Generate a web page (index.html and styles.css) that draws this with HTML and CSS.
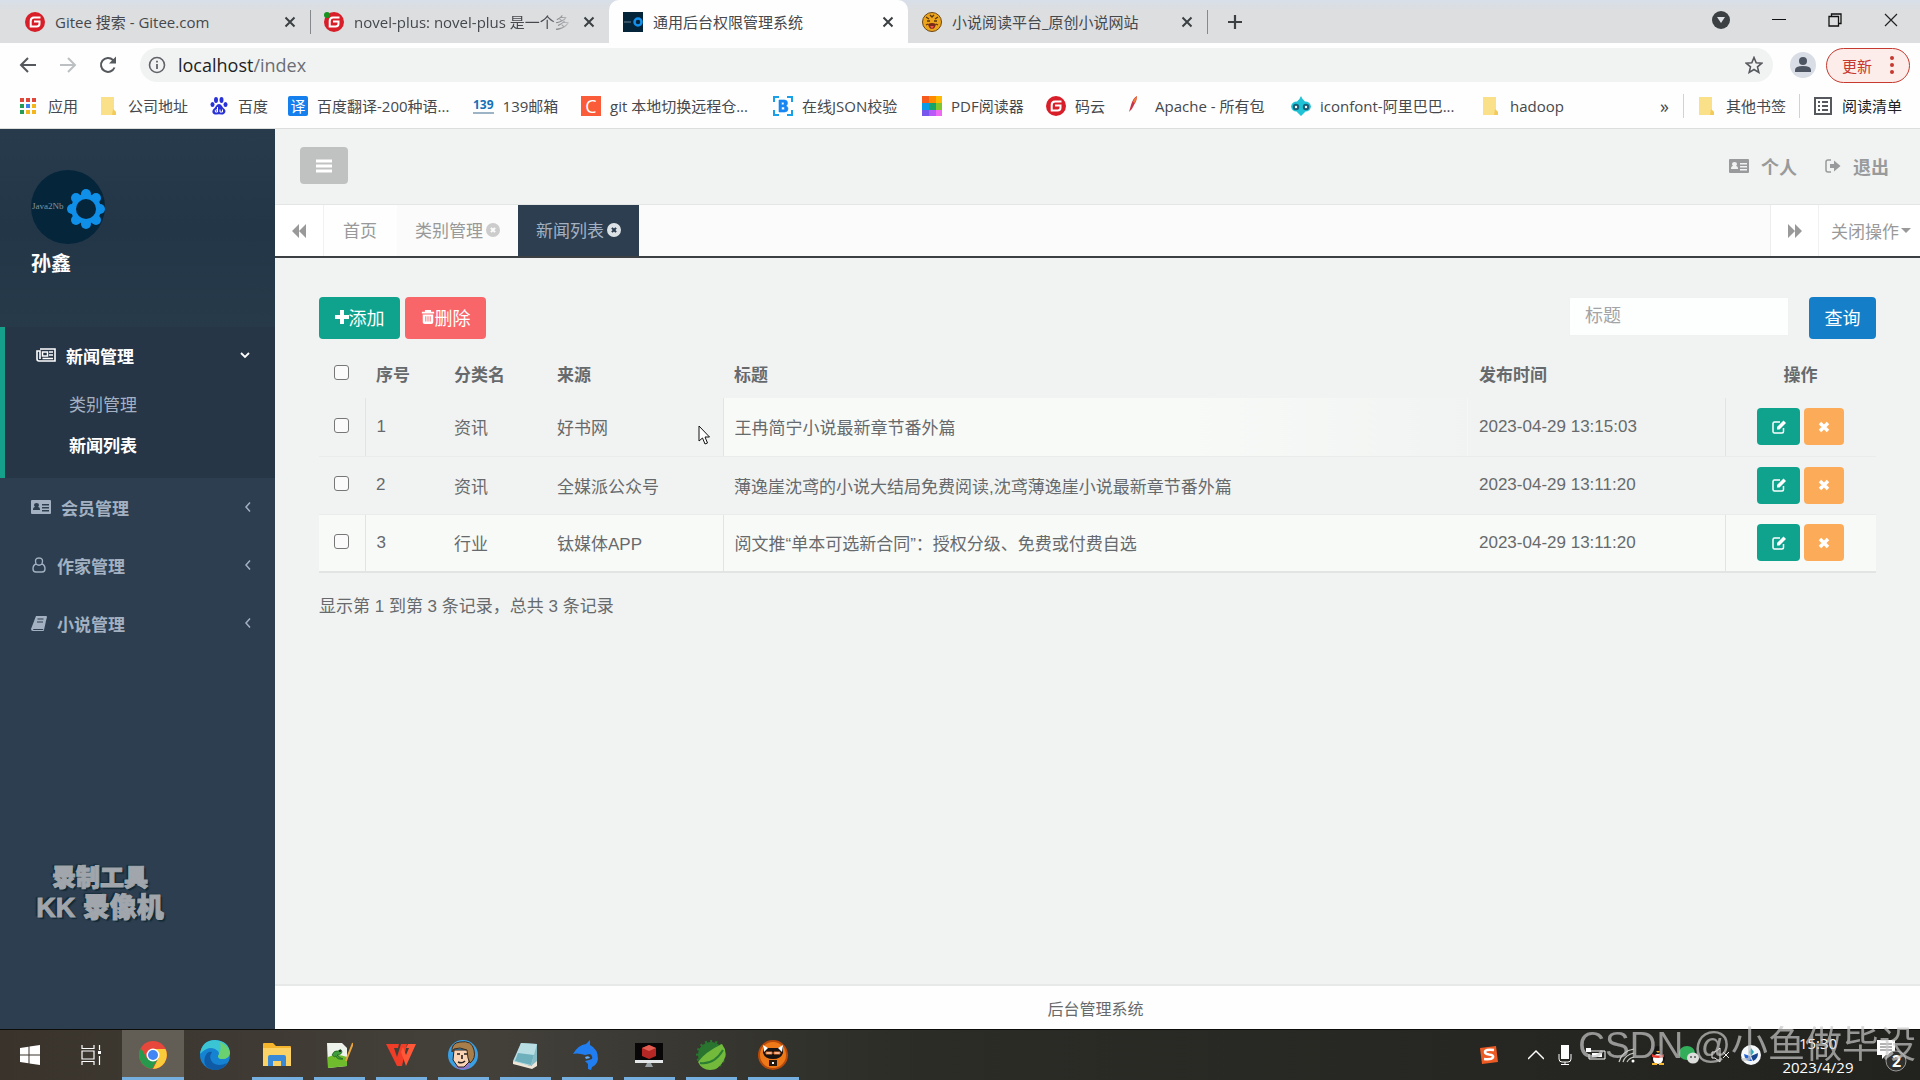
FILE: index.html
```html
<!DOCTYPE html>
<html lang="zh-CN">
<head>
    <meta charset="UTF-8">
    <meta name="viewport" content="width=device-width, initial-scale=1.0">
    <title>通用后台权限管理系统</title>
    <link rel="stylesheet" href="styles.css">
</head>
<body>
    <!-- shared icons -->
    <svg class="sprite" aria-hidden="true">
        <symbol id="gitee" viewBox="0 0 20 20"><circle cx="10" cy="10" r="10" fill="#d81e28"/><path d="M15.500 5.500H9Q5.700 5.500 5.700 9v5.500h6q2.800 0 2.800-2.800V9.500H9" fill="none" stroke="#fff" stroke-width="2"/></symbol>
        <symbol id="folder" viewBox="0 0 20 20"><path d="M2 1h13v13l2 2v3H2z" fill="#fbe08a"/><path d="M14 13l3 3v3h-4z" fill="#f3cb5a"/></symbol>
        <symbol id="cross" viewBox="0 0 12 12"><path d="M1.500 1.500l9 9m0-9l-9 9" stroke="#3c4043" stroke-width="2"/></symbol>
        <symbol id="edit" viewBox="0 0 16 16"><path d="M12.500 9v3.500q0 1.500-1.500 1.500H3.500Q2 14 2 12.500v-8Q2 3 3.500 3H9" fill="none" stroke="#fff" stroke-width="1.500"/><path d="M6 8l6.500-6.500L15 4l-6.500 6.500H6z" fill="#fff"/></symbol>
        <symbol id="remove" viewBox="0 0 12 12"><path d="M2 2l8 8m0-8l-8 8" stroke="#fff" stroke-width="3.500"/></symbol>
        <symbol id="card" viewBox="0 0 20 16"><path d="M0 2q0-1 1-1h18q1 0 1 1v12q0 1-1 1H1q-1 0-1-1zm2 9h7q0-3-2-3 1-1 1-2 0-2-2.500-2T3 6q0 1 1 2-2 0-2 3zm9-6v1.500h7V5zm0 3v1.500h7V8zm0 3v1.500h7V11z" fill="currentColor" fill-rule="evenodd"/></symbol>
        <symbol id="left" viewBox="0 0 8 12"><path d="M6 1.500L2 6l4 4.500" fill="none" stroke="currentColor" stroke-width="1.500"/></symbol>
        <symbol id="down" viewBox="0 0 12 12"><path d="M2 4l4 4 4-4" fill="none" stroke="currentColor" stroke-width="1.800"/></symbol>
        <symbol id="rewind" viewBox="0 0 14 14"><path d="M7 0v14L0 7zm7 0v14L7 7z" fill="currentColor"/></symbol>
        <symbol id="forward" viewBox="0 0 14 14"><path d="M0 0l7 7-7 7zm7 0l7 7-7 7z" fill="currentColor"/></symbol>
        <symbol id="closed" viewBox="0 0 14 14"><path d="M7 0a7 7 0 1 0 0 14A7 7 0 0 0 7 0zM4.200 5.600l1.400-1.400L7 5.600l1.400-1.400 1.400 1.400L8.400 7l1.400 1.400-1.400 1.400L7 8.400 5.600 9.800 4.200 8.400 5.600 7z" fill="currentColor" fill-rule="evenodd"/></symbol>
    </svg>

    <header class="browser">
        <div class="tabstrip">
            <div class="tab"><svg class="i20"><use href="#gitee"/></svg><span>Gitee 搜索 - Gitee.com</span><button class="plain" aria-label="关闭"><svg class="i12"><use href="#cross"/></svg></button></div>
            <div class="tab line"><svg class="i20"><use href="#gitee"/><circle cx="3" cy="3" r="3" fill="#16941f"/></svg><span class="fade">novel-plus: novel-plus 是一个多</span><button class="plain" aria-label="关闭"><svg class="i12"><use href="#cross"/></svg></button></div>
            <div class="tab active"><svg class="i20" viewBox="0 0 20 20"><path fill="#04243a" d="M0 0h20v20H0z"/><path stroke="#6d8090" d="M1 10h7"/><circle cx="15" cy="10" r="3.500" fill="none" stroke="#1292ee" stroke-width="2.500"/></svg><span>通用后台权限管理系统</span><button class="plain" aria-label="关闭"><svg class="i12"><use href="#cross"/></svg></button></div>
            <div class="tab"><svg class="i20" viewBox="0 0 20 20"><circle cx="10" cy="10" r="9.500" fill="#eda51b" stroke="#6b4514"/><path d="M4 5l3 2m9-2l-3 2M5 9h3m4 0h3M4 13l2-1m10 1l-2-1M8 3l2 2 2-2" stroke="#5b3510" stroke-width="1.300" fill="none"/><path d="M6 12q4-2 8 0-1 5-4 5t-4-5" fill="#7b2a1a"/><path d="M8 14h4l-2 3z" fill="#f2564c"/></svg><span>小说阅读平台_原创小说网站</span><button class="plain" aria-label="关闭"><svg class="i12"><use href="#cross"/></svg></button></div>
            <button class="plain newtab line" aria-label="新标签页"><svg class="i16" viewBox="0 0 16 16"><path d="M8 1v14M1 8h14" stroke="#3c4043" stroke-width="2.200"/></svg></button>
            <div class="window">
                <svg class="i18" viewBox="0 0 18 18"><circle cx="9" cy="9" r="9" fill="#3c4043"/><path d="M5 6h8l-4 6z" fill="#dee1e6"/></svg>
                <svg class="i14" viewBox="0 0 14 14"><path d="M0 6.500h14" stroke="#111"/></svg>
                <svg class="i14" viewBox="0 0 14 14"><path d="M1 3.500h9.500v9.500H1zM3.500 3V1H13v9.500h-2" fill="none" stroke="#111" stroke-width="1.300"/></svg>
                <svg class="i14" viewBox="0 0 14 14"><path d="M1 1l12 12M13 1L1 13" stroke="#222" stroke-width="1.200"/></svg>
            </div>
        </div>
        <div class="toolbar">
            <button class="plain" aria-label="后退"><svg class="i20" viewBox="0 0 20 20"><path d="M18 10H3m7-7l-7 7 7 7" fill="none" stroke="#55585c" stroke-width="2"/></svg></button>
            <button class="plain" aria-label="前进"><svg class="i20" viewBox="0 0 20 20"><path d="M2 10h15m-7-7l7 7-7 7" fill="none" stroke="#bdc0c3" stroke-width="2"/></svg></button>
            <button class="plain" aria-label="刷新"><svg class="i20" viewBox="0 0 20 20"><path d="M16.500 12.500A7 7 0 1 1 15 5l2 2" fill="none" stroke="#55585c" stroke-width="2"/><path d="M18 1.500V8.500H11z" fill="#55585c"/></svg></button>
            <div class="omnibox">
                <svg class="i18" viewBox="0 0 18 18"><circle cx="9" cy="9" r="7.500" fill="none" stroke="#5f6368" stroke-width="1.600"/><path d="M9 8v5M9 4.700v1.800" stroke="#5f6368" stroke-width="1.800"/></svg>
                <span class="url">localhost<i>/index</i></span>
                <svg class="i18" viewBox="0 0 18 18"><path d="M9 1.500l2.200 5.200 5.600.5-4.300 3.700 1.300 5.500L9 13.500l-4.800 2.900 1.300-5.500L1.200 7.200l5.600-.5z" fill="none" stroke="#55585c" stroke-width="1.600"/></svg>
            </div>
            <svg class="i28" viewBox="0 0 28 28"><circle cx="14" cy="14" r="13" fill="#d9dde5"/><circle cx="14" cy="10" r="4" fill="#4f5663"/><path d="M6 21v-2q0-4 8-4t8 4v2z" fill="#4f5663"/></svg>
            <button class="update">更新<svg viewBox="0 0 4 18"><circle cx="2" cy="2" r="2"/><circle cx="2" cy="9" r="2"/><circle cx="2" cy="16" r="2"/></svg></button>
        </div>
        <nav class="bookmarks">
            <a href="#"><svg class="i16" viewBox="0 0 16 16"><path d="M0 0h4v4H0zM6 0h4v4H6zM12 0h4v4h-4z" fill="#e1483c"/><path d="M0 6h4v4H0zM0 12h4v4H0z" fill="#249c55"/><path d="M6 6h4v4H6z" fill="#3c82ee"/><path d="M12 6h4v4h-4zM6 12h4v4H6zM12 12h4v4h-4z" fill="#f3b61f"/></svg>应用</a>
            <a href="#"><svg class="i20"><use href="#folder"/></svg>公司地址</a>
            <a href="#"><svg class="i20" viewBox="0 0 20 20"><g fill="#2932d6"><ellipse cx="3.500" cy="8.500" rx="2" ry="2.600"/><ellipse cx="7" cy="4" rx="2" ry="3"/><ellipse cx="12.500" cy="4" rx="2" ry="3"/><ellipse cx="16.500" cy="8.500" rx="2" ry="2.600"/><path d="M10 8c2.500 0 3 3 5.500 5 2.500 3-.5 6-3 5.500q-2.500-.5-5 0C4 19 2 16 4.500 13 7 11 7.500 8 10 8z"/></g><path d="M8.500 11v5h-2q-1.500-2 2-2.500M11 13.500v2.500h2.500v-2.500" stroke="#fff" fill="none"/></svg>百度</a>
            <a href="#"><b class="badge blue">译</b>百度翻译-200种语...</a>
            <a href="#"><b class="mail">139</b>139邮箱</a>
            <a href="#"><b class="badge orange">C</b>git 本地切换远程仓...</a>
            <a href="#"><svg class="i20" viewBox="0 0 20 20"><path d="M6 1H1v5m13-5h5v5M1 14v5h5m8 0h5v-5" fill="none" stroke="#18a0e8" stroke-width="2"/><path d="M6 4h5.500q3 0 3 3 0 2-1.500 2.700 2 .8 2 3.100Q15 16 11.500 16H6zM8.500 8.800h2.500V6.300H8.500zm0 5h3v-2.800h-3z" fill="#1786f2" stroke="#1786f2" stroke-width=".6" fill-rule="evenodd"/></svg>在线JSON校验</a>
            <a href="#"><svg class="i20" viewBox="0 0 20 20"><path fill="#f65a1c" d="M0 0h7v7H0z"/><path fill="#ff8a00" d="M7 0h7v7H7z"/><path fill="#ffb900" d="M14 0h6v7h-6z"/><path fill="#0b9ce5" d="M0 7h7v7H0z"/><path fill="#17a46b" d="M7 7h7v7H7z"/><path fill="#7dc72c" d="M14 7h6v7h-6z"/><path fill="#7656ed" d="M0 14h7v6H0z"/><path fill="#b85af7" d="M7 14h7v6H7z"/><path fill="#ef6af2" d="M14 14h6v6h-6z"/></svg>PDF阅读器</a>
            <a href="#"><svg class="i20"><use href="#gitee"/></svg>码云</a>
            <a href="#"><svg class="i20" viewBox="0 0 20 20"><path d="M3 16l2-7Q7 2 11 0q0 5-3 9-2 5-5 7z" fill="#c8354b"/><path d="M7 6q1-4 4-6 0 3-2 7z" fill="#ee7a35"/></svg>Apache - 所有包</a>
            <a href="#"><svg class="i20" viewBox="0 0 20 20"><path d="M10 0q1 3 4 5.500 5 0 6 5-1 5-5.500 5L10 20l-4.500-4.500Q1 15.500 0 10.500q1-5 6-5Q9 3 10 0z" fill="#1fc3d5"/><circle cx="5" cy="11" r="3.200" fill="#165f79"/><circle cx="15" cy="11" r="3.200" fill="#165f79"/><circle cx="5" cy="11" r="1.200" fill="#fff"/><circle cx="15" cy="11" r="1.200" fill="#fff"/></svg>iconfont-阿里巴巴...</a>
            <a href="#"><svg class="i20"><use href="#folder"/></svg>hadoop</a>
            <span class="more">»</span>
            <a href="#" class="split"><svg class="i20"><use href="#folder"/></svg>其他书签</a>
            <a href="#" class="split dark"><svg class="i20" viewBox="0 0 20 20"><path d="M2 2h16v16H2z" fill="none" stroke="#55585c" stroke-width="2"/><path d="M5 6h2m2 0h6M5 10h2m2 0h6M5 14h2m2 0h6" stroke="#55585c" stroke-width="2"/></svg>阅读清单</a>
        </nav>
    </header>

    <div class="app">
        <aside class="sidebar">
            <div class="profile">
                <svg class="avatar" viewBox="0 0 74 74"><circle cx="37" cy="37" r="37" fill="#04253a"/><text x="1" y="39" class="logo-text">Java2Nb</text><g fill="#0f8fe8"><circle cx="55" cy="39" r="15"/><circle cx="55" cy="24" r="5"/><circle cx="55" cy="54" r="5"/><circle cx="41" cy="39" r="5"/><circle cx="69" cy="39" r="5"/><circle cx="45" cy="28" r="5"/><circle cx="65" cy="28" r="5"/><circle cx="45" cy="50" r="5"/><circle cx="65" cy="50" r="5"/></g><circle cx="55" cy="39" r="10" fill="#04253a"/></svg>
                <strong>孙鑫</strong>
            </div>
            <nav class="menu">
                <div class="group open">
                    <a href="#"><svg class="i20" viewBox="0 0 20 16"><path d="M4 2h15v12H3q-2 0-2-2V4h3v8" fill="none" stroke="currentColor" stroke-width="1.600"/><path d="M6.500 5h5v4h-5zM13 5h4M13 8h4M6.500 11.500H17" fill="none" stroke="currentColor" stroke-width="1.500"/></svg><span>新闻管理</span><svg class="i12"><use href="#down"/></svg></a>
                    <a href="#" class="sub">类别管理</a>
                    <a href="#" class="sub current">新闻列表</a>
                </div>
                <a href="#"><svg class="i20"><use href="#card"/></svg><span>会员管理</span><svg class="i12"><use href="#left"/></svg></a>
                <a href="#"><svg class="i16" viewBox="0 0 14 16"><path d="M4 7Q2 1 7 1t3 6q3 1 3 5 0 3-3 3H4q-3 0-3-3 0-4 3-5 3 2.500 6 0" fill="none" stroke="currentColor" stroke-width="1.400"/></svg><span>作家管理</span><svg class="i12"><use href="#left"/></svg></a>
                <a href="#"><svg class="i16" viewBox="0 0 16 16"><path d="M5 1h10q1 0 1 1l-3 11q0 1-1 1H3q-1 0-1 1h10l3-9-2 9q0 1-1 1H2q-2 0-2-2z" fill="currentColor"/><path d="M6.500 4h6M6 7h6" stroke="#2c3e4f" stroke-width="1.200"/></svg><span>小说管理</span><svg class="i12"><use href="#left"/></svg></a>
            </nav>
            <div class="recorder"><span>录制工具</span><b>KK 录像机</b></div>
        </aside>

        <main class="main">
            <div class="topbar">
                <button class="burger" aria-label="菜单"><svg class="i16" viewBox="0 0 16 16"><path d="M0 3h16M0 8h16M0 13h16" stroke="#fff" stroke-width="3"/></svg></button>
                <a href="#"><svg class="i20"><use href="#card"/></svg>个人</a>
                <a href="#"><svg class="i16" viewBox="0 0 16 16"><path d="M6 2H3Q1 2 1 4v8q0 2 2 2h3" fill="none" stroke="currentColor" stroke-width="1.500"/><path d="M5 6h4V2.500L15.500 8 9 13.500V10H5z" fill="currentColor"/></svg>退出</a>
            </div>
            <div class="pages">
                <button class="plain roll" aria-label="向左"><svg class="i14"><use href="#rewind"/></svg></button>
                <a href="#" class="page home">首页</a>
                <a href="#" class="page">类别管理<svg class="i14 pale"><use href="#closed"/></svg></a>
                <a href="#" class="page on">新闻列表<svg class="i14"><use href="#closed"/></svg></a>
                <button class="plain roll right" aria-label="向右"><svg class="i14"><use href="#forward"/></svg></button>
                <button class="plain closing">关闭操作<i class="caret"></i></button>
            </div>
            <section class="content">
                <div class="actions">
                    <button class="btn green"><svg class="i14" viewBox="0 0 14 14"><path d="M7 0v14M0 7h14" stroke="#fff" stroke-width="4"/></svg>添加</button>
                    <button class="btn red"><svg class="i14" viewBox="0 0 14 16"><path d="M0 3h14M4.500 2V1h5v1" fill="none" stroke="#fff" stroke-width="2"/><path d="M1 5h12v9q0 2-2 2H3q-2 0-2-2zm3 2v6h1V7zm2.500 0v6h1V7zM9 7v6h1V7z" fill="#fff" fill-rule="evenodd"/></svg>删除</button>
                    <input type="text" class="search" placeholder="标题" aria-label="标题">
                    <button class="btn query">查询</button>
                </div>
                <table class="news">
                    <thead>
                        <tr>
                            <th class="c-check"><input type="checkbox" aria-label="全选"></th>
                            <th class="c-no">序号</th>
                            <th class="c-type">分类名</th>
                            <th class="c-from">来源</th>
                            <th>标题</th>
                            <th class="c-time">发布时间</th>
                            <th class="c-op">操作</th>
                        </tr>
                    </thead>
                    <tbody>
                        <tr>
                            <td><input type="checkbox" aria-label="选择 1"></td>
                            <td>1</td>
                            <td>资讯</td>
                            <td>好书网</td>
                            <td>王冉简宁小说最新章节番外篇</td>
                            <td>2023-04-29 13:15:03</td>
                            <td class="c-op"><div class="ops"><button class="edit" aria-label="编辑"><svg class="i16"><use href="#edit"/></svg></button><button class="del" aria-label="删除"><svg class="i12"><use href="#remove"/></svg></button></div></td>
                        </tr>
                        <tr>
                            <td><input type="checkbox" aria-label="选择 2"></td>
                            <td>2</td>
                            <td>资讯</td>
                            <td>全媒派公众号</td>
                            <td>薄逸崖沈鸢的小说大结局免费阅读,沈鸢薄逸崖小说最新章节番外篇</td>
                            <td>2023-04-29 13:11:20</td>
                            <td class="c-op"><div class="ops"><button class="edit" aria-label="编辑"><svg class="i16"><use href="#edit"/></svg></button><button class="del" aria-label="删除"><svg class="i12"><use href="#remove"/></svg></button></div></td>
                        </tr>
                        <tr>
                            <td><input type="checkbox" aria-label="选择 3"></td>
                            <td>3</td>
                            <td>行业</td>
                            <td>钛媒体APP</td>
                            <td>阅文推“单本可选新合同”：授权分级、免费或付费自选</td>
                            <td>2023-04-29 13:11:20</td>
                            <td class="c-op"><div class="ops"><button class="edit" aria-label="编辑"><svg class="i16"><use href="#edit"/></svg></button><button class="del" aria-label="删除"><svg class="i12"><use href="#remove"/></svg></button></div></td>
                        </tr>
                    </tbody>
                </table>
                <p class="summary">显示第 1 到第 3 条记录，总共 3 条记录</p>
            </section>
            <footer class="footer">后台管理系统</footer>
        </main>
    </div>

    <div class="taskbar">
        <div class="task start"><svg class="i20" viewBox="0 0 20 20"><path d="M0 3l8.500-1.300v7.800H0zM9.500 1.500L20 0v9.500H9.500zM0 10.500h8.500v7.800L0 17zM9.500 10.500H20V20L9.500 18.500z" fill="#fff"/></svg></div>
        <div class="task"><svg class="i20" viewBox="0 0 20 20"><path d="M1 0v3.500h12V0M1 20v-3.500h12V20M1 6h12v8H1zM18.500 0v5M18.500 11v9" fill="none" stroke="#fff" stroke-width="1.200"/><path d="M17 6h3v3h-3z" fill="#fff"/></svg></div>
        <div class="task run focus"><svg class="i28" viewBox="0 0 28 28"><circle cx="14" cy="14" r="14" fill="#e8483b"/><path d="M2 7a14 14 0 0 0 11 21l6-10.500H8z" fill="#27994c"/><path d="M14 28A14 14 0 0 0 26.500 8H14l5.500 9z" fill="#f9cb3a"/><circle cx="14" cy="14" r="6.500" fill="#fff"/><circle cx="14" cy="14" r="5" fill="#4285f4"/></svg></div>
        <div class="task"><svg class="i30" viewBox="0 0 30 30"><circle cx="15" cy="15" r="15" fill="#1583d2"/><path d="M0 14Q2 0 15 0q14 1 15 13-1 6-8 6-4 0-4-3 2-2 0-5-8-7-18 3z" fill="#3bc5d4"/><path d="M20 2q9 4 10 11-1 6-8 6-4 0-4-3 4-6 2-14z" fill="#6bd06f"/><path d="M12 12q-4 6 1 11 6 4 14 0-5 8-14 7Q2 27 5 17q2-6 7-5z" fill="#0f5ba6"/></svg></div>
        <div class="task run"><svg class="i28" viewBox="0 0 28 28"><path d="M0 3q0-1 1-1h9l3 3h14q1 0 1 1v18H0z" fill="#f5b52d"/><path d="M0 7h28v18H0z" fill="#fbd266"/><path d="M5 25V16q0-2 2-2h14q2 0 2 2v9h-5v-5h-8v5z" fill="#388ad8"/></svg></div>
        <div class="task run"><svg class="i28" viewBox="0 0 28 28"><path d="M2 2h15l5 5v18L3 27z" fill="#edf2ea"/><path d="M3 16q8-4 19 0v9L3 27z" fill="#6fbd2c"/><path d="M7 14q2-5 6-4 3-3 4 0 0 4-5 4 3 3 6 4-6 1-7-3-1 2-4-1z" fill="#3f9e3b" stroke="#17491d" stroke-width=".6"/><circle cx="15" cy="10" r="1" fill="#111"/><path d="M28 2l-6 15-1 3" stroke="#e9a53b" stroke-width="2" fill="none"/></svg></div>
        <div class="task run"><svg class="i30" viewBox="0 0 30 24"><path d="M0 1h13l-1 4H8l3 9 4-13h6l-5 22h-5z" fill="#ef3d28"/><path d="M15 9l5 14 10-22h-8l-2 4h3l-3 7-3-8z" fill="#ff5737"/></svg></div>
        <div class="task run"><svg class="i30" viewBox="0 0 30 30"><circle cx="15" cy="15" r="15" fill="#3a9fe3"/><path d="M7 27q8 5 15 0l-2-6H10z" fill="#8b78c8"/><path d="M6 10h15v12l-5 5h-6l-5-7z" fill="#fad4b5" stroke="#27211f"/><path d="M4 12Q3 3 12 2q12-2 14 8 2 9-4 13l-2-5-1-8-7-2-6 1z" fill="#a87e4b" stroke="#3b2a1c"/><path d="M9 14h3m4 0h3M10 22q4 2 7-1M14 15v4" stroke="#26201e" stroke-width="1.600" fill="none"/></svg></div>
        <div class="task run"><svg class="i28" viewBox="0 0 28 28"><path d="M10 2l16 1v22L2 23z" fill="#87bcc5"/><path d="M10 2l16 1-6 22L2 20z" fill="#b8dde3"/><path d="M7 12l16 2-3 10-16-4z" fill="#6fb0bd"/><path d="M2 20l18 5 6-5v5l-5 3L2 23z" fill="#eee7d8"/></svg></div>
        <div class="task run"><svg class="i30" viewBox="0 0 30 30"><path d="M1 14Q6 5 14 4l4-4v5q8 4 8 14-1 6-6 8l-1 3-3-1v-5l-3-3 4-1 3-1q1-3-2-5l-5 1-4-1q-4-1-9 0z" fill="#217ef1"/><path d="M13 17q4-2 5 1l-4 1z" fill="#5db0ff"/></svg></div>
        <div class="task run"><svg class="i28" viewBox="0 0 28 28"><path d="M0 2h28v17H0z" fill="#080606"/><path d="M7 7l7-3 7 3v8l-7 3-7-3z" fill="#b52724"/><path d="M7 7l7-3 7 3-7 3z" fill="#e35c51"/><path d="M0 19h28v3H0z" fill="#e4e8e9"/><path d="M12 22h4l2 4h-8z" fill="#9ba2a5"/></svg></div>
        <div class="task run"><svg class="i30" viewBox="0 0 30 30"><circle cx="15" cy="15" r="13" fill="#29742f" stroke="#29742f" stroke-width="4" stroke-dasharray="2 3"/><path d="M2 22Q9 12 26 4q6 8 2 16-5 10-14 10-8 0-12-8z" fill="#72b93c"/><path d="M4 23q14 2 23-13" fill="none" stroke="#2a7d31" stroke-width="2"/></svg></div>
        <div class="task run"><svg class="i30" viewBox="0 0 30 30"><circle cx="15" cy="15" r="14" fill="#ed7919" stroke="#b84b0c" stroke-width="2"/><path d="M5 7l5 1h10l5-1v6q-2 6-10 6T5 13z" fill="#171312"/><path d="M5 5l5 3-4 4zm20 0l-5 3 4 4z" fill="#fff"/><path d="M8 12h6v2H8zm8 0h6v2h-6z" fill="#fff" stroke="#e66a1e"/><path d="M11 20h8v6h-8z" fill="#25180f"/><path d="M14 22h2v2h-2z" fill="#fff"/></svg></div>

        <div class="tray">
            <svg class="i20" viewBox="0 0 20 20"><path d="M1 3l16-2 2 16-16 2z" fill="#ed5b24"/><path d="M15 5q-9-1-9 2 0 2 4 2.500 5 .5 4 3Q12 15 5 14" fill="none" stroke="#fff" stroke-width="2.500"/></svg>
            <svg class="i16" viewBox="0 0 16 16"><path d="M0 12l8-8 8 8" stroke="#fff" stroke-width="1.500" fill="none"/></svg>
            <svg class="i20" viewBox="0 0 20 20"><path d="M6 0h8v14H6z" fill="#fff"/><path d="M4 9v5q0 3 3 3h6q3 0 3-3V9M10 17v3M6 19.500h8" stroke="#fff" fill="none"/></svg>
            <svg class="i20" viewBox="0 0 20 20"><path d="M5 6h14v8H3v-5" stroke="#fff" fill="none"/><path d="M6 8h10v4H6zM0 3h5v4H0z" fill="#fff"/></svg>
            <svg class="i20" viewBox="0 0 20 20"><path d="M2 17Q5 6 17 4M6 17Q8 10 17 8M10 17q2-4 7-5" stroke="#c9cac7" stroke-width="1.200" fill="none"/><circle cx="16" cy="16" r="1.500" fill="#fff"/></svg>
            <svg class="i20" viewBox="0 0 20 20"><path d="M10 1q5 0 5 7 3 4 2 7-3 4-7 4t-7-4q-1-3 2-7 0-7 5-7z" fill="#151515"/><ellipse cx="10" cy="14" rx="5" ry="5" fill="#fff"/><path d="M4 9q6 3 12 0v3q-6 2-12 0z" fill="#e33b31"/><path d="M4 18h5v2H4zm7 0h5v2h-5zM8 6h4l-2 2z" fill="#f5b72f"/></svg>
            <svg class="i20" viewBox="0 0 20 20"><ellipse cx="8" cy="8" rx="8" ry="7" fill="#32ae5b"/><ellipse cx="14" cy="13" rx="6" ry="5.500" fill="#dedfdd"/><circle cx="12" cy="12" r="1" fill="#555"/><circle cx="16" cy="12" r="1" fill="#555"/></svg>
            <svg class="i20" viewBox="0 0 20 20"><path d="M2 7h3l5-4v14l-5-4H2zM13 7l6 6m0-6l-6 6" stroke="#eee" fill="none"/></svg>
            <svg class="i20" viewBox="0 0 20 20"><circle cx="10" cy="10" r="10" fill="#f4f8fa"/><path d="M3 9l6 2 2 5q-7 1-8-7z" fill="#2163d4"/><path d="M17 8l-7 3 2 5q5-2 5-8z" fill="#18458d"/><path d="M10 3l3 4-3 4-2-4z" fill="#27a9b9"/></svg>
            <div class="clock"><span>15:30</span><span>2023/4/29</span></div>
            <svg class="notice" viewBox="0 0 34 34"><path d="M2 2h18v15h-9l-4 4v-4H2z" fill="#fff"/><path d="M5 6h12M5 9h12M5 12h12" stroke="#666"/><circle cx="21" cy="23" r="10" fill="#30312e" stroke="#999"/><text x="17" y="29" class="count">2</text></svg>
        </div>
        <div class="watermark">CSDN @小鱼做毕设</div>
    </div>

    <svg class="pointer" viewBox="0 0 12 20"><path d="M1 1v15l3.500-3 2.500 6 2.500-1-2.500-6h4.500z" fill="#fff" stroke="#111"/></svg>
</body>
</html>
```
FILE: styles.css
```css
* {
    box-sizing: border-box;
}
body {
    margin: 0;
    min-height: 100vh;
    display: flex;
    flex-direction: column;
    font-family: "Liberation Sans", "Noto Sans CJK SC", sans-serif;
    font-size: 17px;
    color: #676a6c;
    background: #f1f3f2;
}
a {
    color: inherit;
    text-decoration: none;
}
button, input {
    font-family: inherit;
    font-size: inherit;
}
svg {
    flex: none;
}
.sprite { position: absolute; width: 0; height: 0; }
.i12 { width: 12px; height: 12px; }
.i14 { width: 14px; height: 14px; }
.i16 { width: 16px; height: 16px; }
.i18 { width: 18px; height: 18px; }
.i20 { width: 20px; height: 20px; }
.i28 { width: 28px; height: 28px; }
.i30 { width: 30px; height: 30px; }
.plain {
    display: flex;
    align-items: center;
    justify-content: center;
    padding: 0;
    border: 0;
    background: none;
    color: inherit;
}

/* browser */
.browser {
    font-family: "Open Sans", "Noto Sans CJK SC", sans-serif;
    font-size: 15px;
    color: #45484c;
    background: #fdfefd;
    border-bottom: 1px solid #dcdddd;
}
.tabstrip {
    display: flex;
    height: 43px;
    padding-left: 11px;
    background: linear-gradient(#d8dfe9, #dcdee0 10px);
}
.tab {
    display: flex;
    align-items: center;
    gap: 10px;
    width: 299px;
    padding: 0 14px;
    white-space: nowrap;
}
.tab span {
    flex: 1;
    overflow: hidden;
}
.tab.active {
    border-radius: 10px 10px 0 0;
    background: #fdfefd;
}
.fade {
    -webkit-mask-image: linear-gradient(90deg, #000 88%, transparent);
    mask-image: linear-gradient(90deg, #000 88%, transparent);
}
.line {
    background: linear-gradient(#85888c, #85888c) left center / 1px 24px no-repeat;
}
.newtab {
    width: 56px;
}
.window {
    display: flex;
    align-items: center;
    gap: 42px;
    margin-left: auto;
    padding: 0 22px 4px 0;
}
.toolbar {
    display: flex;
    align-items: center;
    gap: 20px;
    height: 44px;
    padding: 0 10px 0 18px;
}
.omnibox {
    flex: 1;
    display: flex;
    align-items: center;
    gap: 12px;
    height: 34px;
    margin-left: 2px;
    padding: 0 10px 0 8px;
    border-radius: 17px;
    background: #f1f3f3;
}
.url {
    flex: 1;
    font-size: 18px;
    color: #222;
}
.url i {
    font-style: normal;
    color: #6b6e72;
}
.toolbar > .i28 {
    margin-left: -4px;
}
.update {
    display: flex;
    align-items: center;
    justify-content: space-between;
    width: 84px;
    height: 35px;
    margin-left: -11px;
    padding: 0 15px;
    border: 1px solid #c5392f;
    border-radius: 18px;
    background: #fcecea;
    color: #c5392f;
    font-size: 15px;
}
.update svg {
    width: 4px;
    height: 18px;
    fill: #c5392f;
}
.bookmarks {
    display: grid;
    grid-template-columns: 79px 110px 79px 185px 108px 192px 149px 124px 80px 165px 190px 120px 1fr 116px 107px;
    align-items: center;
    height: 41px;
    padding: 0 14px 4px 20px;
    white-space: nowrap;
}
.bookmarks a {
    display: flex;
    align-items: center;
    gap: 9px;
}
.bookmarks a:first-child {
    gap: 12px;
}
.bookmarks .more {
    padding-right: 14px;
    text-align: right;
    font-size: 18px;
}
.bookmarks .split {
    height: 24px;
    padding-left: 13px;
    border-left: 1px solid #d0d2d4;
}
.bookmarks .dark {
    color: #202124;
}
.badge {
    width: 20px;
    height: 20px;
    line-height: 20px;
    text-align: center;
    font-weight: normal;
    color: #fff;
}
.blue {
    border-radius: 2px;
    background: #147fed;
}
.orange {
    background: #fa5b38;
    font-size: 18px;
}
.mail {
    font-size: 12px;
    color: #1471b8;
    border-bottom: 2px solid #9db4c6;
    line-height: 14px;
}

/* sidebar */
.app {
    flex: 1;
    display: flex;
}
.sidebar {
    width: 275px;
    background: #2c3e4f;
    color: #a3b1c2;
}
.profile {
    display: flex;
    flex-direction: column;
    gap: 4px;
    height: 198px;
    padding: 41px 31px 0;
    background: linear-gradient(#283b4c, #223647 50%, #263a4a);
    color: #fff;
    font-size: 20px;
}
.avatar {
    width: 74px;
    height: 74px;
}
.logo-text {
    font: 9px "Liberation Serif", serif;
    fill: #8293a0;
}
.menu a {
    display: flex;
    align-items: center;
    gap: 10px;
    height: 58px;
    padding: 0 21px 0 31px;
    font-weight: bold;
}
.menu a span {
    flex: 1;
}
.menu .open {
    height: 151px;
    border-left: 5px solid #14a08b;
    background: #273646;
    color: #fff;
}
.menu .open > a:first-child {
    height: 56px;
    padding-right: 24px;
}
.menu .open > .sub {
    height: 41px;
    padding-left: 64px;
    font-weight: normal;
    color: #a3b1c2;
}
.menu .open > .current {
    font-weight: bold;
    color: #fff;
}
.recorder {
    display: flex;
    flex-direction: column;
    width: 200px;
    margin-top: 211px;
    text-align: center;
    font-size: 24px;
    font-weight: 900;
    line-height: 30px;
    color: #a0a6ac;
    -webkit-text-stroke: 1px #a0a6ac;
    text-shadow: 0 0 2px #142b36, 2px 2px 1px #142b36, -2px -1px 1px #142b36;
}
.recorder b {
    font-size: 27px;
}

/* main */
.main {
    flex: 1;
    display: flex;
    flex-direction: column;
}
.topbar {
    display: flex;
    align-items: center;
    gap: 28px;
    height: 76px;
    padding: 0 31px 2px 25px;
    border-bottom: 1px solid #e3e6e5;
    font-size: 18px;
    font-weight: bold;
    color: #989a9b;
}
.topbar a {
    display: flex;
    align-items: center;
    gap: 12px;
}
.burger {
    display: flex;
    align-items: center;
    justify-content: center;
    width: 48px;
    height: 37px;
    margin-right: auto;
    border: 0;
    border-radius: 4px;
    background: #c0c1c1;
}
.pages {
    display: flex;
    height: 53px;
    border-bottom: 2px solid #3b3f41;
    background: #fafbfa;
    color: #999;
}
.roll {
    width: 49px;
    border-right: 1px solid #f0f2f1;
    background: #fefffe;
}
.roll.right {
    margin-left: auto;
    border-left: 1px solid #eceeed;
}
.page {
    display: flex;
    align-items: center;
    gap: 3px;
    padding: 0 18px 2px;
}
.page.home {
    padding: 0 20px 2px 19px;
    background: #fdfefd;
}
.page.on {
    background: #2c3e4f;
    color: #a3b1c2;
}
.page.on svg {
    color: #dde2e7;
}
.pale {
    color: #ccc;
}
.closing {
    padding: 0 9px 0 12px;
    background: #fefffe;
}
.caret {
    margin-left: 2px;
    border: 5px solid transparent;
    border-top-color: currentColor;
    border-bottom: 0;
}
.content {
    flex: 1;
    padding: 39px 44px 0;
}
.actions {
    display: flex;
    gap: 5px;
    height: 52px;
}
.btn {
    display: flex;
    align-items: center;
    justify-content: center;
    width: 81px;
    height: 42px;
    padding: 0 0 3px;
    border: 0;
    border-radius: 4px;
    color: #fff;
    font-size: 18px;
}
.green { background: #0fa28c; }
.red { background: #f9666a; }
.query {
    width: 67px;
    background: #147fc8;
}
.search {
    width: 220px;
    height: 39px;
    margin: 0 15px 0 auto;
    padding: 0 15px;
    border: 1px solid #f0f2f2;
    background: #fdfefe;
    font-size: 18px;
}
.search::placeholder {
    color: #a2a4a5;
}
.news {
    width: 100%;
    border-collapse: collapse;
    table-layout: fixed;
    text-align: left;
}
.news th {
    height: 49px;
    padding: 0 11px;
}
.news td {
    height: 58px;
    padding: 0 11px;
    border-bottom: 1px solid #e9ecea;
}
.news td:first-child, .news th:first-child {
    padding: 0 0 3px 15px;
}
.news tr:nth-child(odd) td:nth-child(1),
.news tr:nth-child(odd) td:nth-child(4),
.news tr:nth-child(odd) td:nth-child(6) {
    border-right: 1px solid #e1e4e2;
}
.news tr:nth-child(1) td:nth-child(5) {
    background: linear-gradient(90deg, #f8faf8 60%, #f1f3f2);
}
.news tr:nth-child(3) td {
    background: #f8faf8;
    border-bottom: 2px solid #e1e4e2;
}
.c-check { width: 46px; }
.c-no { width: 78px; }
.c-type { width: 103px; }
.c-from { width: 177px; }
.c-time { width: 257px; }
.c-op {
    width: 151px;
    text-align: center;
}
.news input {
    display: block;
    appearance: none;
    width: 15px;
    height: 15px;
    margin: 0;
    border: 1px solid #777;
    border-radius: 3px;
    background: #fafbfa;
}
.ops {
    display: flex;
    justify-content: center;
    gap: 4px;
}
.ops button {
    display: flex;
    align-items: center;
    justify-content: center;
    width: 43px;
    height: 37px;
    border: 0;
    border-radius: 4px;
    background: #0fa28c;
}
.ops .del {
    width: 40px;
    background: #fcac59;
}
.summary {
    margin: 19px 0 0;
}
.footer {
    height: 45px;
    padding-right: 4px;
    line-height: 48px;
    border-top: 2px solid #e6e9e8;
    background: #fdfefd;
    font-size: 16px;
    text-align: center;
}

/* taskbar */
.taskbar {
    position: relative;
    display: flex;
    height: 51px;
    border-top: 1px solid #0c0c0b;
    background: linear-gradient(90deg, #39332b, #44413b 25%, #2b2c26 48%, #22231f);
    color: #fff;
}
.task {
    display: flex;
    align-items: center;
    justify-content: center;
    width: 62px;
}
.task.start {
    width: 60px;
}
.task.run {
    background: linear-gradient(#75afe0, #75afe0) center bottom / 51px 3px no-repeat;
}
.task.focus {
    background: linear-gradient(#75afe0, #75afe0) center bottom / 62px 3px no-repeat, #625d55;
}
.tray {
    display: flex;
    align-items: center;
    gap: 11px;
    margin-left: auto;
    padding-right: 11px;
}
.tray > svg:first-child {
    margin-right: 18px;
}
.clock {
    display: flex;
    flex-direction: column;
    align-items: center;
    width: 92px;
    font: 15px/24px "Open Sans", sans-serif;
}
.notice {
    width: 34px;
    height: 34px;
}
.count {
    font: bold 16px "Open Sans", sans-serif;
    fill: #fff;
}
.watermark {
    position: absolute;
    right: 4px;
    top: -9px;
    font: 37px/50px "Liberation Sans", "Noto Sans CJK SC", sans-serif;
    color: #c8c8c8;
    opacity: 0.7;
    white-space: nowrap;
}
.pointer {
    position: absolute;
    left: 698px;
    top: 425px;
    width: 12px;
    height: 20px;
}
```
